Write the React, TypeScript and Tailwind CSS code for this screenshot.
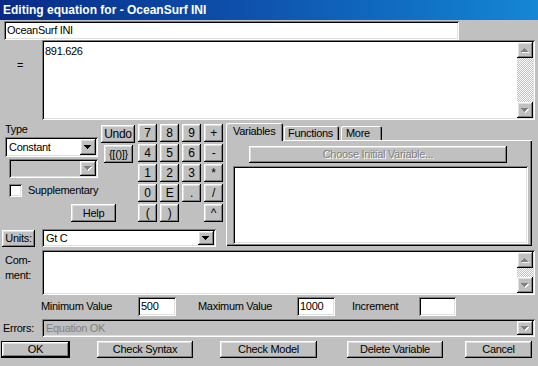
import React from 'react';

const raised =
  'bg-[#c0c0c0] shadow-[inset_-1px_-1px_#000,inset_1px_1px_#fff,inset_-2px_-2px_#808080,inset_2px_2px_#dfdfdf]';
const sunken =
  'shadow-[inset_1px_1px_#808080,inset_-1px_-1px_#fff,inset_2px_2px_#000,inset_-2px_-2px_#dfdfdf]';
const checker =
  'bg-[image:repeating-conic-gradient(#fff_0_25%,#c0c0c0_0_50%)] bg-[length:2px_2px]';

const ArrowDown = ({ disabled = false }: { disabled?: boolean }) => (
  <svg width="8" height="5" viewBox="0 0 8 5" shapeRendering="crispEdges">
    {disabled && <path d="M1 1h7v1H1zM2 2h5v1H2zM3 3h3v1H3zM4 4h1v1H4z" fill="#fff" />}
    <path d="M0 0h7v1H0zM1 1h5v1H1zM2 2h3v1H2zM3 3h1v1H3z" fill={disabled ? '#808080' : '#000'} />
  </svg>
);

const ArrowUp = ({ disabled = false }: { disabled?: boolean }) => (
  <svg width="8" height="5" viewBox="0 0 8 5" shapeRendering="crispEdges">
    {disabled && <path d="M4 1h1v1H4zM3 2h3v1H3zM2 3h5v1H2zM1 4h7v1H1z" fill="#fff" />}
    <path d="M3 0h1v1H3zM2 1h3v1H2zM1 2h5v1H1zM0 3h7v1H0z" fill={disabled ? '#808080' : '#000'} />
  </svg>
);

const Btn = ({ children, className = '' }: { children: React.ReactNode; className?: string }) => (
  <div className={`${raised} flex items-center justify-center shrink-0 ${className}`}>{children}</div>
);

const Combo = ({ text, className = '', disabled = false }: { text?: string; className?: string; disabled?: boolean }) => (
  <div className={`${sunken} ${disabled ? 'bg-[#c0c0c0]' : 'bg-white'} flex items-center p-[2px] shrink-0 ${className}`}>
    <div className={`flex-1 pl-[2px] ${disabled ? 'text-[#808080]' : ''}`}>{text}</div>
    <Btn className="w-[16px] h-full">
      <ArrowDown disabled={disabled} />
    </Btn>
  </div>
);

const ScrollBar = () => (
  <div className="w-[16px] flex flex-col shrink-0">
    <Btn className="h-[16px]">
      <ArrowUp disabled />
    </Btn>
    <div className={`flex-1 ${checker}`} />
    <Btn className="h-[16px]">
      <ArrowDown disabled />
    </Btn>
  </div>
);

const keys = ['7', '8', '9', '+', '4', '5', '6', '-', '1', '2', '3', '*', '0', 'E', '.', '/', '(', ')', '', '^'];

export default function App() {
  return (
    <div className="w-[538px] h-[366px] overflow-hidden bg-[#c0c0c0] font-['Liberation_Sans',Arial,sans-serif] text-[11px] leading-[13px] tracking-[-0.3px] text-black flex flex-col">
      <div className="h-[20px] shrink-0 bg-linear-to-r from-[#082a86] via-[#0f55b0] to-[#1587d4] flex items-center pl-[3px] text-white font-bold text-[12px] tracking-normal">
        Editing equation for - OceanSurf INI
      </div>

      <div className={`${sunken} bg-white mt-[1px] ml-[4px] w-[455px] h-[19px] flex items-center pl-[3px] shrink-0`}>
        OceanSurf INI
      </div>

      <div className="flex h-[80px] shrink-0">
        <div className="w-[42px] pl-[17px] pt-[19px]">=</div>
        <div className={`${sunken} bg-white w-[493px] flex p-[2px]`}>
          <div className="flex-1 pl-[1px] pt-[3px]">891.626</div>
          <ScrollBar />
        </div>
      </div>

      <div className="flex h-[127px] shrink-0">
        <div className="w-[224px] flex flex-col">
          <div className="flex">
            <div className="w-[138px] flex flex-col">
              <div className="flex">
                <div className="w-[101px] pl-[5px] flex flex-col">
                  <div className="h-[17px] pt-[3px]">Type</div>
                  <Combo text="Constant" className="w-[93px] h-[20px]" />
                  <Combo className="w-[89px] h-[19px] mt-[2px] ml-[4px]" disabled />
                </div>
                <div className="flex flex-col pt-[5px]">
                  <Btn className="w-[34px] h-[18px] text-[12px]">Undo</Btn>
                  <Btn className="w-[29px] h-[18px] mt-[2px] ml-[3px]">{'{[()]}'}</Btn>
                </div>
              </div>
              <div className="flex items-center mt-[5px] pl-[9px] h-[14px]">
                <div className={`${sunken} bg-white w-[13px] h-[13px]`} />
                <span className="ml-[6px]">Supplementary</span>
              </div>
              <Btn className="w-[45px] h-[18px] mt-[7px] ml-[71px]">Help</Btn>
            </div>
            <div className="grid grid-cols-[repeat(4,19px)] auto-rows-[18px] gap-x-[3px] gap-y-[2px] pt-[4px]">
              {keys.map((k, i) =>
                k ? (
                  <Btn key={i} className="text-[12px]">
                    {k}
                  </Btn>
                ) : (
                  <div key={i} />
                ),
              )}
            </div>
          </div>
          <div className="flex items-center mt-[7px]">
            <Btn className="w-[33px] h-[17px] ml-[2px]">Units:</Btn>
            <Combo text="Gt C" className="w-[174px] h-[18px] ml-[7px]" />
          </div>
        </div>

        <div className="w-[306px] ml-[2px] flex flex-col pt-[2px]">
          <div className="flex items-end h-[18px] relative z-10">
            <div className="h-[18px] w-[57px] relative top-[1px] bg-[#c0c0c0] rounded-t-[2px] shadow-[inset_1px_1px_#fff,inset_-1px_0_#000,inset_-2px_0_#808080] flex items-center pl-[7px] pb-[1px]">
              Variables
            </div>
            <div className="h-[14px] w-[55px] ml-[1px] rounded-t-[2px] shadow-[inset_1px_1px_#fff,inset_-1px_0_#000,inset_-2px_0_#808080] flex items-center pl-[4px] pt-[1px]">
              Functions
            </div>
            <div className="h-[14px] w-[41px] ml-[2px] rounded-t-[2px] shadow-[inset_1px_1px_#fff,inset_-1px_0_#000,inset_-2px_0_#808080] flex items-center pl-[5px] pt-[1px]">
              More
            </div>
          </div>
          <div className="h-[106px] shadow-[inset_1px_1px_#fff,inset_-1px_-1px_#000,inset_-2px_-2px_#808080] flex flex-col pt-[6px] pl-[23px]">
            <Btn className="w-[258px] h-[17px] text-[#808080] [text-shadow:1px_1px_#fff]">Choose Initial Variable...</Btn>
            <div className={`${sunken} bg-white w-[295px] h-[78px] mt-[3px] -ml-[16px]`} />
          </div>
        </div>
      </div>

      <div className="flex h-[45px] mt-[3px] shrink-0">
        <div className="w-[42px] pl-[5px] pt-[3px] leading-[15px]">
          Com-
          <br />
          ment:
        </div>
        <div className={`${sunken} bg-white w-[493px] flex p-[2px]`}>
          <div className="flex-1" />
          <ScrollBar />
        </div>
      </div>

      <div className="flex items-center h-[19px] mt-[2px] shrink-0">
        <span className="w-[97px] ml-[41px]">Minimum Value</span>
        <div className={`${sunken} bg-white w-[38px] h-[19px] flex items-center pl-[3px]`}>500</div>
        <span className="w-[99px] ml-[22px]">Maximum Value</span>
        <div className={`${sunken} bg-white w-[38px] h-[19px] flex items-center pl-[3px]`}>1000</div>
        <span className="w-[67px] ml-[17px]">Increment</span>
        <div className={`${sunken} bg-white w-[37px] h-[19px]`} />
      </div>

      <div className="flex items-center h-[18px] mt-[3px] shrink-0">
        <span className="w-[42px] pl-[3px]">Errors:</span>
        <Combo text="Equation OK" className="w-[493px] h-[18px]" disabled />
      </div>

      <div className="flex items-center h-[17px] mt-[4px] shrink-0">
        <div className="ml-[1px] w-[69px] h-[17px] border border-black flex">
          <Btn className="flex-1">OK</Btn>
        </div>
        <Btn className="w-[96px] h-[17px] ml-[27px]">Check Syntax</Btn>
        <Btn className="w-[97px] h-[17px] ml-[27px]">Check Model</Btn>
        <Btn className="w-[96px] h-[17px] ml-[30px]">Delete Variable</Btn>
        <Btn className="w-[67px] h-[17px] ml-[22px]">Cancel</Btn>
      </div>
    </div>
  );
}
